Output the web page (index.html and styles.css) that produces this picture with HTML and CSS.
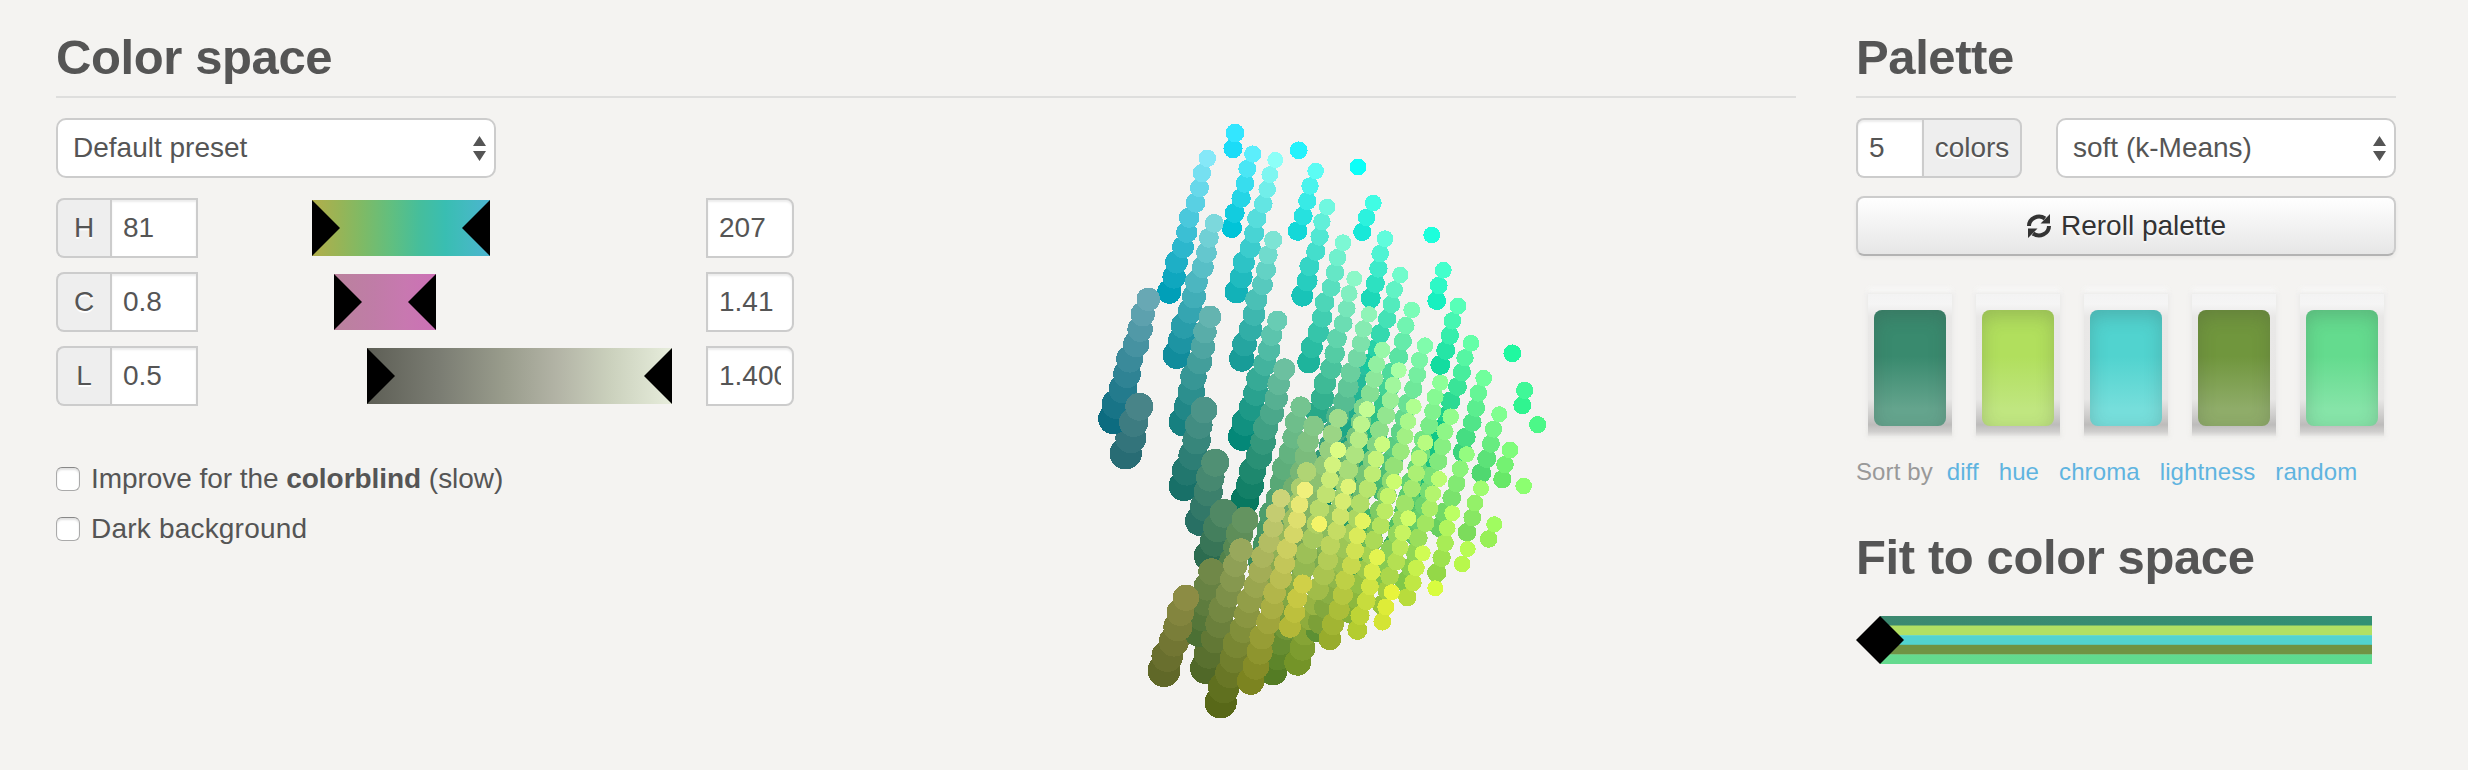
FILE: index.html
```html
<!DOCTYPE html>
<html lang="en">
<head>
<meta charset="utf-8">
<title>Color space</title>
<link rel="stylesheet" href="styles.css">
</head>
<body>
<main class="page">
  <section class="space">
    <h2 class="title ruled">Color space</h2>
    <div class="space-body">
      <div class="controls">
        <div class="select preset"><span>Default preset</span><svg class="arrows" width="13" height="25" viewBox="0 0 13 25"><path d="M6.5 0 13 10H0zM0 15h13L6.500 25z"/></svg></div>
        <div class="range">
          <div class="group low"><span class="addon">H</span><span class="field">81</span></div>
          <div class="track"><div class="slider hue"><i class="grip left"></i><i class="grip right"></i></div></div>
          <div class="field end">207</div>
        </div>
        <div class="range">
          <div class="group low"><span class="addon">C</span><span class="field">0.8</span></div>
          <div class="track"><div class="slider chroma"><i class="grip left"></i><i class="grip right"></i></div></div>
          <div class="field end">1.41</div>
        </div>
        <div class="range">
          <div class="group low"><span class="addon">L</span><span class="field">0.5</span></div>
          <div class="track"><div class="slider light"><i class="grip left"></i><i class="grip right"></i></div></div>
          <div class="field end"><span class="clip">1.400</span></div>
        </div>
        <div class="checks">
          <div class="check"><i class="box"></i><span>Improve for the <b>colorblind</b> (slow)</span></div>
          <div class="check"><i class="box"></i><span class="dark">Dark background</span></div>
        </div>
      </div>
      <svg class="cloud" id="cloud" width="600" height="640" viewBox="1000 100 600 640" shape-rendering="crispEdges"></svg>
    </div>
  </section>
  <section class="palette">
    <h2 class="title ruled">Palette</h2>
    <div class="options">
      <div class="group count"><span class="field">5</span><span class="addon">colors</span></div>
      <div class="select method"><span>soft (k-Means)</span><svg class="arrows" width="13" height="25" viewBox="0 0 13 25"><path d="M6.5 0 13 10H0zM0 15h13L6.500 25z"/></svg></div>
    </div>
    <div class="button"><svg width="26" height="26" viewBox="0 0 26 26"><g fill="none" stroke="#333" stroke-width="4"><path d="M3 13A10 9.500 0 0 1 19 5.500"/><path d="M23 13A10 9.500 0 0 1 7 20.500"/></g><path fill="#333" d="M24 1v9.500H14.500zM2 25v-9.500h9.500z"/></svg><span>Reroll palette</span></div>
    <div class="swatches">
      <div class="glass"><div class="swatch s1"></div></div>
      <div class="glass"><div class="swatch s2"></div></div>
      <div class="glass"><div class="swatch s3"></div></div>
      <div class="glass"><div class="swatch s4"></div></div>
      <div class="glass"><div class="swatch s5"></div></div>
    </div>
    <div class="sort"><span class="label">Sort by</span><a>diff</a><a>hue</a><a>chroma</a><a>lightness</a><a>random</a></div>
    <h2 class="title">Fit to color space</h2>
    <svg class="fit" width="518" height="48" viewBox="0 0 518 48">
      <defs>
        <linearGradient id="f1"><stop stop-color="#3c8970"/><stop offset="1" stop-color="#329074"/></linearGradient>
        <linearGradient id="f2"><stop stop-color="#65da8e"/><stop offset="1" stop-color="#5cda90"/></linearGradient>
      </defs>
      <rect x="24" width="492" height="10" fill="url(#f1)"/>
      <rect x="24" y="9.500" width="492" height="10" fill="#b1e063"/>
      <rect x="24" y="19.200" width="492" height="10" fill="#52d3d0"/>
      <rect x="24" y="28.800" width="492" height="10" fill="#709344"/>
      <rect x="24" y="38.400" width="492" height="9.600" fill="url(#f2)"/>
      <path d="M0 24 24 0l24 24-24 24z"/>
    </svg>
  </section>
</main>
<script src="cloud.js"></script>
</body>
</html>
```
FILE: styles.css
```css
* { box-sizing: border-box; }
body { margin: 0; background: #f4f3f1; color: #555; font: 28px/60px "Liberation Sans", Arial, sans-serif; }
.page { display: flex; gap: 60px; width: 2468px; height: 770px; padding: 18px 72px 0 56px; overflow: hidden; }
.space { width: 1740px; }
.palette { width: 540px; }
.title { margin: 0; height: 80px; font-size: 49px; line-height: 78px; font-weight: bold; letter-spacing: -0.4px; }
.ruled { border-bottom: 2px solid #dededd; }
.space-body { display: flex; gap: 206px; }
.controls { width: 738px; padding-top: 20px; }
.select { display: flex; align-items: center; justify-content: space-between; height: 60px; padding: 0 8px 0 15px; background: #fff; border: 2px solid #ccc; border-radius: 10px; line-height: 56px; }
.arrows { fill: #555; }
.preset { width: 440px; margin-bottom: 20px; }
.range { display: flex; height: 60px; margin-bottom: 14px; }
.group { display: flex; }
.addon, .field { height: 60px; border: 2px solid #ccc; line-height: 55px; white-space: nowrap; }
.addon { background: #eee; text-align: center; text-shadow: 0 2px 0 #fff; }
.field { background: #fff; padding: 0 11px; box-shadow: inset 0 2px 2px rgba(0,0,0,.075); }
.low { width: 142px; }
.low .addon { width: 54px; border-right: 0; border-radius: 8px 0 0 8px; }
.low .field { width: 88px; }
.track { width: 508px; padding: 2px 0; }
.end { width: 88px; border-radius: 0 8px 8px 0; }
.clip { display: block; width: 62px; overflow: hidden; }
.slider { display: flex; justify-content: space-between; height: 56px; }
.hue { width: 178px; margin-left: 114px; background: linear-gradient(90deg, #b2ae4b, #98b456 15%, #7fba65 28%, #60bf80 45%, #46be9b 60%, #39beb2 75%, #43bac0 87%, #4bb4d0); }
.chroma { width: 102px; margin-left: 136px; background: linear-gradient(90deg, #ba829d, #c07ca7 40%, #c878b0 70%, #cc70b6); }
.light { width: 305px; margin-left: 169px; background: linear-gradient(90deg, #5d5e55, #7b7d73 24%, #999c8c 45%, #b2b3a5 62%, #cbd1bd 80%, #e7eddc); }
.grip { width: 28px; height: 56px; background: #000; }
.left { clip-path: polygon(0 0, 100% 50%, 0 100%); }
.right { clip-path: polygon(100% 0, 0 50%, 100% 100%); }
.checks { padding-top: 39px; }
.check { display: flex; align-items: center; gap: 11px; height: 40px; margin-bottom: 10px; line-height: 40px; letter-spacing: -.05px; }
.dark { letter-spacing: .2px; }
.box { width: 24px; height: 24px; background: #fff; border: 1px solid #aaa; border-top-color: #888; border-radius: 6px; box-shadow: inset 0 2px 2px rgba(0,0,0,.12); }
.cloud { flex: none; margin-top: 2px; }
.options { display: flex; gap: 34px; padding-top: 20px; }
.count .field { width: 66px; border-right: 0; border-radius: 8px 0 0 8px; }
.count .addon { width: 100px; border-radius: 0 8px 8px 0; }
.method { width: 340px; }
.button { display: flex; align-items: center; justify-content: center; gap: 9px; height: 60px; margin-top: 18px; color: #333; border: 2px solid #ccc; border-bottom-color: #b3b3b3; border-radius: 8px; background: linear-gradient(#fff, #e6e6e6); box-shadow: 0 2px 4px rgba(0,0,0,.05); line-height: 56px; text-shadow: 0 2px 2px rgba(255,255,255,.75); }
.swatches { display: flex; gap: 24px; padding: 38px 12px 0; }
.glass { width: 84px; height: 142px; padding: 16px 6px; background: linear-gradient(#f3f3f3, #f5f5f5 7%, #e9e8e7 16%, #e8e7e6 74%, #cfcecd 85%, #bdbcbb 92%, #d0cfce 97%, #e8e7e5); box-shadow: 0 0 4px 1px rgba(228,227,225,.8), 0 -6px 5px rgba(250,250,250,.8); }
.swatch { height: 116px; border-radius: 8px; box-shadow: inset 0 6px 18px rgba(60,60,60,.22); }
.s1 { background: linear-gradient(#398a6e 40%, #64a48d 85%); }
.s2 { background: linear-gradient(#b1df5d 40%, #c0e680 85%); }
.s3 { background: linear-gradient(#51d3cf 40%, #76dedb 85%); }
.s4 { background: linear-gradient(#70963d 40%, #8fac69 85%); }
.s5 { background: linear-gradient(#64db8e 40%, #86e4a8 85%); }
.sort { display: flex; gap: 20px; height: 40px; margin-top: 16px; font-size: 24px; line-height: 40px; white-space: nowrap; letter-spacing: .1px; }
.label { margin-right: -6px; color: #999; }
.sort a { color: #5fb4e0; }
.sort + .title { margin-top: 26px; }
.fit { display: block; margin-top: 18px; }
```
FILE: cloud.js
```js
// Each strand: x, y, radius, colour of its light end; the same for its dark end; number of dots.
const strands = [
  [1235,133,9,'33e6ff',1233,148.7,9.2,'1bdcf8',2],
  [1207.3,158.3,8.4,'85e8f8',1169.3,291.7,11.7,'009fb8',10],
  [1252.7,154,8.2,'5ceefc',1231.7,227.7,10,'00c4d8',6],
  [1275.3,160,7.6,'8cfff8',1236.3,291.7,11.4,'12b2b8',10],
  [1298.7,150.3,8.5,'25f2fc',1298.7,150.3,8.5,'25f2fc',1],
  [1315.7,171,7.9,'5cfcf4',1297.7,231,9.5,'14d8d8',5],
  [1358,167,8,'0cfff8',1358,167,8,'0cfff8',1],
  [1214.3,223.3,9,'7cd8dc',1176.7,355,13.6,'118c9c',10],
  [1273.3,240,8.8,'7ce4d4',1241.7,359,12.3,'189c98',9],
  [1327.3,207,7.9,'70f8e0',1302.3,295.7,10.5,'18c4b8',7],
  [1373.3,203,8,'40fce4',1362.3,232,8.7,'18e8d8',3],
  [1431.7,235,8,'1cffdc',1431.7,235,8,'1cffdc',1],
  [1148.3,299.3,11.4,'68a8b4',1113.3,419,14.8,'0c6c80',9],
  [1210,316.7,10.8,'64b4b0',1183.3,421.7,14.3,'168080',8],
  [1277.3,320.7,9.8,'68ccb4',1242,436.7,13.7,'048878',9],
  [1343,242.7,8,'7cf8d4',1308.7,362,11,'1eb49c',9],
  [1385,238.7,8,'60fcdc',1370.7,298.3,9.6,'1cd8b8',5],
  [1443.3,270.3,8,'44ffcc',1436.7,300.7,9,'18f0c0',3],
  [1354.3,278.7,7.6,'8cf8c8',1318,413,11.8,'28a888',10],
  [1400.3,275,7.8,'70fccc',1372,363,10,'18c8a0',7],
  [1284.3,369.3,10.5,'6cc0a0',1245,500,14,'087860',10],
  [1139.3,406.7,13.6,'488488',1125.7,453.3,15.8,'286c74',4],
  [1204,410,13,'4c9488',1184,485.7,15,'187068',6],
  [1215.3,462.7,13.6,'509074',1200,521,14.6,'287064',5],
  [1224,513.3,14,'508864',1209,556,14.8,'2c6c50',4],
  [1300.7,406.7,10,'74c490',1262,560,14,'3c8c5c',11],
  [1313.7,426,10,'84c888',1270,580,13.5,'588c4c',11],
  [1245,520,13,'649460',1228,575,14,'4c7c44',5],
  [1211.7,571.7,13,'708848',1199,632,14.6,'4c7034',5],
  [1241,550,11.3,'98a85c',1205.7,668.3,15.3,'506828',9],
  [1186,597.7,12.8,'8c8c44',1164,670.7,16,'606828',6],
  [1281,498.3,8.8,'ccd478',1220.7,702.3,15.7,'586818',15],
  [1305,490,8,'f0f07c',1250.7,681,13.4,'7c8420',14],
  [1306.7,471.7,9.3,'b0d474',1270,600,12.5,'7c9c44',9],
  [1319.3,524,7.6,'f4f468',1319.3,524,7.6,'f4f468',1],
  [1302.7,584,9.2,'d0d048',1290,626.7,10.6,'b4b838',4],
  [1348.3,486.7,7.6,'e0f478',1297.7,662.3,13,'749428',13],
  [1362.7,521,7.8,'e4f460',1330,639,11,'98ac2c',9],
  [1377.3,557.3,7.8,'e4f450',1357.3,630,9.6,'b4cc30',6],
  [1391.7,592.3,7.7,'e8f43c',1382.3,621.7,8.5,'d4e434',3],
  [1435.3,588.3,7.6,'d8fc40',1435.3,588.3,7.6,'d8fc40',1],
  [1422.7,553.3,7.6,'d0fc54',1407.3,597.3,8.7,'b8dc3c',4],
  [1408.3,518.3,7.6,'d0fc68',1382,605,9.5,'98c43c',7],
  [1467.7,549,7.6,'b8fc54',1462.3,564,7.9,'b8f84c',2],
  [1452.3,513.3,7.6,'bcff64',1436.7,572.7,9.2,'94d848',5],
  [1494.3,524.3,7.7,'a0fc60',1488.7,539,8.4,'98f058',2],
  [1523.7,486,7.9,'8cff70',1523.7,486,7.9,'8cff70',1],
  [1510,450,8,'80fc7c',1502.3,479.3,8.7,'68e868',3],
  [1481,488.3,7.6,'a0fc70',1467,532.3,9,'7cdc5c',4],
  [1499.3,414.3,7.7,'80ff90',1481.3,473.3,9.5,'50d870',5],
  [1466.7,454.3,7.7,'94fc80',1440,527,9.8,'68d060',6],
  [1537.7,424.7,8.3,'4cf888',1537.7,424.7,8.3,'4cf888',1],
  [1524.7,390.3,8.3,'40f898',1522.3,405.3,8.6,'30f490',2],
  [1512.3,353.3,8.5,'20f8a0',1512.3,353.3,8.5,'20f8a0',1],
  [1483.7,378.3,8,'70ff9c',1463,452,9.7,'3cd47c',6],
  [1471,343.3,8,'64ffa8',1442,430,10,'10c888',7],
  [1458,306,8,'58ffb8',1440.3,365,9.5,'14dca0',5],
  [1411.7,310,8,'7cfcb8',1374,435,10.8,'20b880',9],
  [1369,314.3,7.8,'90f4b8',1326,460,12.5,'309878',11],
  [1425,345.7,7.9,'80fcac',1383,490,11,'48b870',11],
  [1382.3,350,7.8,'98f8a8',1343,480,11.5,'60ac6c',10],
  [1398.7,370.3,7.6,'a8ffa4',1358,505,11,'68b468',10],
  [1440.3,382.7,7.8,'8cff98',1400,525,10.5,'50c064',11],
  [1367,409.3,7.8,'c4fc94',1323,560,12,'7cac50',11],
  [1413.7,406.7,7.6,'b0ff90',1372,540,10.5,'70bc58',10],
  [1450.7,416.7,7.9,'94fc8c',1415,535,10.2,'60c864',9],
  [1338.3,418.3,9,'a0dc8c',1295,560,12.5,'74a050',10],
  [1338,450,7.7,'dcfc84',1273,671,14,'547c24',16],
  [1382.3,444.3,7.7,'ccfc80',1320,622,11.5,'7ca038',13],
  [1394,481.7,7.6,'ccfc70',1351,613,10.4,'84b038',10],
  [1425.3,442.7,7.6,'b8fc80',1382,580,10.2,'80c44c',10],
  [1439,479,7.6,'bcfc74',1405,582,9.8,'80c848',8],
  // dark greens seen through the gaps of the lighter strands
  [1362,365,10.2,'28c0a0',1318,500,13,'108868',10],
  [1376,435,11,'20b080',1330,560,13,'389458',9],
  [1374,519,11,'40b468',1318,630,12,'5c9034',8],
  [1437,430,9.5,'10c888',1395,545,11,'40b060',9]
];
const rgb = h => [0, 2, 4].map(i => parseInt(h.substr(i, 2), 16));
const dots = [];
for (const [x1, y1, r1, c1, x2, y2, r2, c2, n] of strands) {
  const a = rgb(c1), b = rgb(c2);
  for (let i = 0; i < n; i++) {
    const t = n > 1 ? i / (n - 1) : 0;
    const mix = (p, q) => p + (q - p) * t;
    const wobble = i > 0 && i < n - 1 ? [1, -1.2, 0.6][i % 3] : 0;
    dots.push({ x: mix(x1, x2) + wobble, y: mix(y1, y2), r: mix(r1, r2) + 0.4, c: a.map((v, k) => Math.round(mix(v, b[k]))) });
  }
}
dots.sort((p, q) => q.r - p.r);
const cloud = document.getElementById('cloud');
for (const d of dots) {
  const dot = document.createElementNS('http://www.w3.org/2000/svg', 'circle');
  dot.setAttribute('cx', d.x.toFixed(1));
  dot.setAttribute('cy', d.y.toFixed(1));
  dot.setAttribute('r', d.r.toFixed(1));
  dot.setAttribute('fill', `rgb(${d.c})`);
  cloud.appendChild(dot);
}
```
